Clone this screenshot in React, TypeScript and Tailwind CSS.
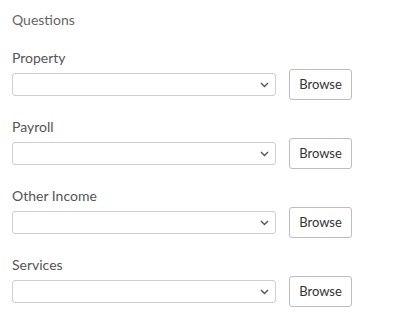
import React from 'react';

const fields = ['Property', 'Payroll', 'Other Income', 'Services'];

function Chevron() {
  return (
    <svg width="9" height="6" viewBox="0 0 9 6" className="text-[#555]">
      <path d="M1 1l3.5 3.5L8 1" fill="none" stroke="currentColor" strokeWidth="1.4" />
    </svg>
  );
}

export default function App() {
  return (
    <div className="min-h-screen bg-white px-[12px] pt-[11px] font-['Lato',sans-serif]">
      <div className="text-[14px] leading-[18px] text-[#666]">Questions</div>
      <div className="mt-[19px] flex flex-col gap-[17px]">
        {fields.map(name => (
          <div key={name} className="flex flex-col">
            <label className="text-[14px] leading-[20px] text-[#555]">{name}</label>
            <div className="mt-[1px] flex h-[31px] items-center">
              <div className="flex h-[23px] w-[264px] items-center justify-end rounded-[3px] border border-[#cfcfcf] bg-white pr-[6px]">
                <Chevron />
              </div>
              <button className="ml-[13px] h-[31px] w-[63px] rounded-[3px] border border-[#bdbdbd] bg-white text-[13px] text-[#333]">
                Browse
              </button>
            </div>
          </div>
        ))}
      </div>
    </div>
  );
}
